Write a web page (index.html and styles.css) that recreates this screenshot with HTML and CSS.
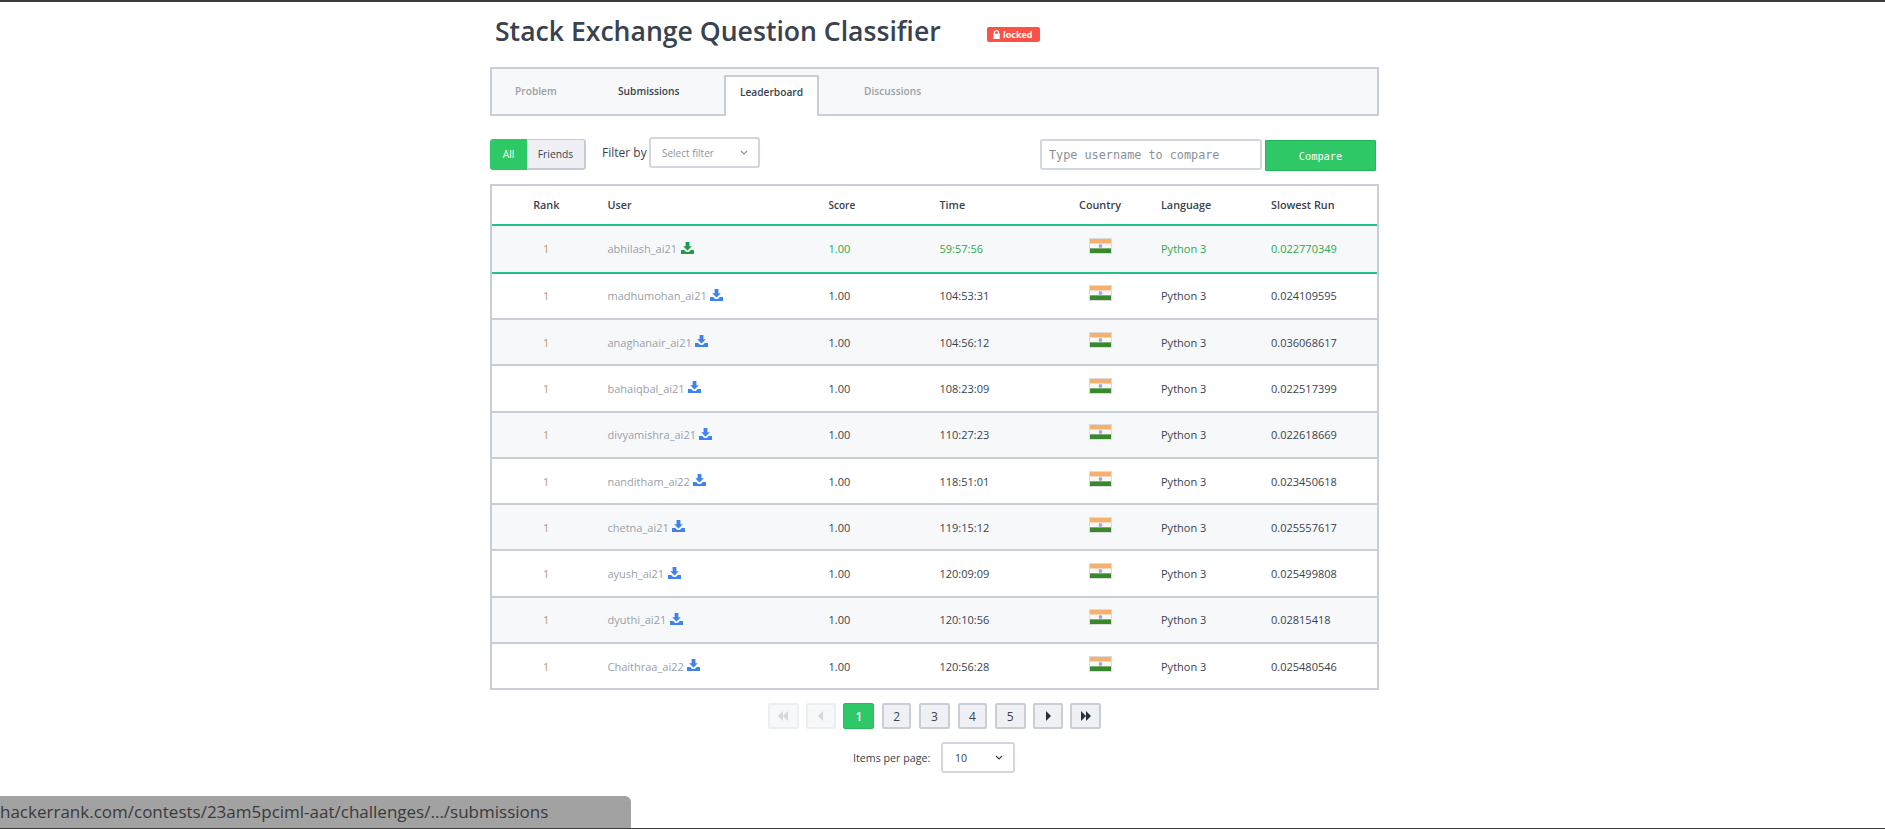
FILE: index.html
```html
<!DOCTYPE html>
<html lang="en">
<head>
<meta charset="utf-8">
<title>Stack Exchange Question Classifier</title>
<link rel="stylesheet" href="styles.css">
</head>
<body>
<svg class="defs" width="0" height="0" aria-hidden="true">
  <symbol id="dl" viewBox="0 0 13 12">
    <path d="M4.6 0h3.8v4.2h2.4L6.5 8.4 2.2 4.2h2.4z"/>
    <path d="M0 8h3.2l2 2h2.6l2-2H13v4H0z"/>
  </symbol>
  <symbol id="flag" viewBox="0 0 23 16">
    <rect width="23" height="16" fill="#dcdcdc"/>
    <rect x="1" y="1" width="21" height="4.6" fill="#f6b06e"/>
    <rect x="1" y="5.6" width="21" height="4.8" fill="#f8f8f8"/>
    <rect x="1" y="10.4" width="21" height="4.6" fill="#37892b"/>
    <circle cx="11.5" cy="8" r="1.9" fill="#a5a8d4"/>
  </symbol>
</svg>
<main class="page">
  <header class="title-row">
    <h1 class="title">Stack Exchange Question Classifier</h1>
    <span class="badge"><svg class="lock" viewBox="0 0 10 10"><path d="M2 4.2V3a3 3 0 0 1 6 0v1.2h.6V10H1.4V4.2zm1.4 0h3.2V3a1.6 1.6 0 0 0-3.2 0z"/></svg>locked</span>
  </header>

  <nav class="tabs">
    <a class="tab tab-problem muted">Problem</a>
    <a class="tab tab-subs">Submissions</a>
    <a class="tab tab-lead active">Leaderboard</a>
    <a class="tab tab-disc muted">Discussions</a>
  </nav>

  <section class="filters">
    <div class="seg"><span class="seg-all">All</span><span class="seg-friends">Friends</span></div>
    <label class="filter-label">Filter by</label>
    <div class="select filter-select"><span>Select filter</span><svg class="chev" viewBox="0 0 8 5"><path d="M1 1l3 3 3-3"/></svg></div>
    <div class="compare">
      <input class="compare-input" type="text" placeholder="Type username to compare">
      <button class="compare-btn">Compare</button>
    </div>
  </section>

  <section class="board">
    <div class="row head">
      <div class="c-rank">Rank</div><div class="c-user">User</div><div class="c-score score-head">Score</div><div class="c-time">Time</div><div class="c-country">Country</div><div class="c-lang">Language</div><div class="c-run">Slowest Run</div>
    </div>
    <div class="row me">
      <div class="c-rank">1</div><div class="c-user"><a>abhilash_ai21</a><svg class="dl"><use href="#dl"/></svg></div><div class="c-score">1.00</div><div class="c-time">59:57:56</div><div class="c-country"><svg class="flag"><use href="#flag"/></svg></div><div class="c-lang">Python 3</div><div class="c-run">0.022770349</div>
    </div>
    <div class="row">
      <div class="c-rank">1</div><div class="c-user"><a>madhumohan_ai21</a><svg class="dl"><use href="#dl"/></svg></div><div class="c-score">1.00</div><div class="c-time">104:53:31</div><div class="c-country"><svg class="flag"><use href="#flag"/></svg></div><div class="c-lang">Python 3</div><div class="c-run">0.024109595</div>
    </div>
    <div class="row alt">
      <div class="c-rank">1</div><div class="c-user"><a>anaghanair_ai21</a><svg class="dl"><use href="#dl"/></svg></div><div class="c-score">1.00</div><div class="c-time">104:56:12</div><div class="c-country"><svg class="flag"><use href="#flag"/></svg></div><div class="c-lang">Python 3</div><div class="c-run">0.036068617</div>
    </div>
    <div class="row">
      <div class="c-rank">1</div><div class="c-user"><a>bahaiqbal_ai21</a><svg class="dl"><use href="#dl"/></svg></div><div class="c-score">1.00</div><div class="c-time">108:23:09</div><div class="c-country"><svg class="flag"><use href="#flag"/></svg></div><div class="c-lang">Python 3</div><div class="c-run">0.022517399</div>
    </div>
    <div class="row alt">
      <div class="c-rank">1</div><div class="c-user"><a>divyamishra_ai21</a><svg class="dl"><use href="#dl"/></svg></div><div class="c-score">1.00</div><div class="c-time">110:27:23</div><div class="c-country"><svg class="flag"><use href="#flag"/></svg></div><div class="c-lang">Python 3</div><div class="c-run">0.022618669</div>
    </div>
    <div class="row">
      <div class="c-rank">1</div><div class="c-user"><a>nanditham_ai22</a><svg class="dl"><use href="#dl"/></svg></div><div class="c-score">1.00</div><div class="c-time">118:51:01</div><div class="c-country"><svg class="flag"><use href="#flag"/></svg></div><div class="c-lang">Python 3</div><div class="c-run">0.023450618</div>
    </div>
    <div class="row alt">
      <div class="c-rank">1</div><div class="c-user"><a>chetna_ai21</a><svg class="dl"><use href="#dl"/></svg></div><div class="c-score">1.00</div><div class="c-time">119:15:12</div><div class="c-country"><svg class="flag"><use href="#flag"/></svg></div><div class="c-lang">Python 3</div><div class="c-run">0.025557617</div>
    </div>
    <div class="row">
      <div class="c-rank">1</div><div class="c-user"><a>ayush_ai21</a><svg class="dl"><use href="#dl"/></svg></div><div class="c-score">1.00</div><div class="c-time">120:09:09</div><div class="c-country"><svg class="flag"><use href="#flag"/></svg></div><div class="c-lang">Python 3</div><div class="c-run">0.025499808</div>
    </div>
    <div class="row alt">
      <div class="c-rank">1</div><div class="c-user"><a>dyuthi_ai21</a><svg class="dl"><use href="#dl"/></svg></div><div class="c-score">1.00</div><div class="c-time">120:10:56</div><div class="c-country"><svg class="flag"><use href="#flag"/></svg></div><div class="c-lang">Python 3</div><div class="c-run">0.02815418</div>
    </div>
    <div class="row">
      <div class="c-rank">1</div><div class="c-user"><a>Chaithraa_ai22</a><svg class="dl"><use href="#dl"/></svg></div><div class="c-score">1.00</div><div class="c-time">120:56:28</div><div class="c-country"><svg class="flag"><use href="#flag"/></svg></div><div class="c-lang">Python 3</div><div class="c-run">0.025480546</div>
    </div>
  </section>

  <nav class="pager">
    <span class="pg wide off"><svg class="pi" viewBox="0 0 12 10"><path d="M6 0v10L1 5zM11 0v10L6 5z"/></svg></span>
    <span class="pg off"><svg class="pi" viewBox="0 0 12 10"><path d="M8 0v10L3 5z"/></svg></span>
    <span class="pg wide cur">1</span>
    <span class="pg">2</span>
    <span class="pg wide">3</span>
    <span class="pg">4</span>
    <span class="pg wide">5</span>
    <span class="pg"><svg class="pi" viewBox="0 0 12 10"><path d="M4 0v10l5-5z"/></svg></span>
    <span class="pg wide"><svg class="pi" viewBox="0 0 12 10"><path d="M1 0v10l5-5zM6 0v10l5-5z"/></svg></span>
  </nav>

  <div class="per-page">
    <span class="per-label">Items per page:</span>
    <div class="select per-select"><span>10</span><svg class="chev dark" viewBox="0 0 8 5"><path d="M1 1l3 3 3-3"/></svg></div>
  </div>
</main>
<div class="status">hackerrank.com/contests/23am5pciml-aat/challenges/.../submissions</div>
</body>
</html>
```

FILE: styles.css
```css
* { box-sizing: border-box; }
html, body { margin: 0; height: 100%; }
body {
  height: 829px;
  overflow: hidden;
  background: #fff;
  font-family: "Open Sans", sans-serif;
  color: #39424e;
  border-top: 2px solid #3a3a3a;
  border-bottom: 1px solid #3a3a3a;
  position: relative;
}
.defs { position: absolute; }
.page { width: 889px; margin-left: 490px; }

.title-row { display: flex; align-items: center; height: 48px; padding: 10px 0 0 5px; }
.title { margin: 0; font-size: 26.6px; line-height: 38px; font-weight: 600; color: #39424e; width: 492px; white-space: nowrap; }
.badge {
  display: inline-flex; align-items: center; gap: 2px;
  height: 15px; padding: 0 5px; margin-top: 6px; width: 53px;
  background: #fb5146; color: #fff; border-radius: 2px;
  font-size: 9px; font-weight: 700; white-space: nowrap;
}
.lock { width: 9px; height: 9px; fill: #fff; flex: none; }

.tabs {
  display: flex; align-items: flex-end;
  height: 49px; margin-top: 17px;
  background: #f7f8fa; border: 2px solid #c9cdd6;
  font-size: 10.2px; font-weight: 600;
}
.tab { display: block; height: 44px; line-height: 43px; white-space: nowrap; }
.tab-problem { width: 126px; padding-left: 23px; }
.muted { color: #9a9fa8; }
.tab-subs { width: 106px; color: #39424e; }
.tab-lead {
  width: 95px; height: 41px; line-height: 30px; margin-bottom: -2px; text-align: center;
  background: #fff; border: 2px solid #c9cdd6; border-bottom: 0; color: #39424e;
}
.tab-disc { margin-left: 45px; }

.filters { display: flex; align-items: flex-start; height: 46.5px; margin-top: 21px; position: relative; }
.seg { display: flex; height: 31px; margin-top: 2px; font-size: 10.3px; }
.seg-all { width: 37px; background: #2ec866; color: #fff; line-height: 30px; text-align: center; border-radius: 3px 0 0 3px; }
.seg-friends { width: 59px; background: #eff0f4; color: #39424e; line-height: 29px; text-align: center; border: 1px solid #c6cbd5; border-left: 0; border-bottom-width: 2px; border-right-width: 2px; border-radius: 0 3px 3px 0; }
.filter-label { font-size: 12px; margin-left: 16px; line-height: 32px; width: 47px; white-space: nowrap; }
.select {
  display: flex; align-items: center; justify-content: space-between;
  background: #fff; border: 2px solid #d2d6de; border-radius: 3px;
}
.filter-select { width: 111px; height: 31px; padding: 0 10px 0 11px; font-size: 10px; color: #8f949c; }
.chev { width: 8px; height: 5px; fill: none; stroke: #8f949c; stroke-width: 1.2; }
.chev.dark { stroke: #39424e; }
.compare { display: flex; margin-left: auto; margin-right: 3px; gap: 3px; }
.compare-input {
  width: 222px; height: 31px; margin-top: 2px; padding: 0 7px;
  border: 2px solid #d2d6de; border-radius: 3px; background: #fff;
  font-family: "DejaVu Sans Mono", monospace; font-size: 11.8px; outline: 0;
}
.compare-input::placeholder { color: #8b8f96; opacity: 1; }
.compare-btn {
  width: 111px; height: 31px; margin-top: 3px; padding: 0;
  background: #2ec866; border: 1px solid #23b658; border-radius: 1px; color: #fff;
  font-family: "DejaVu Sans Mono", monospace; font-size: 10.3px;
}

.board { border: 2px solid #c9cdd6; font-size: 11px; }
.row {
  display: grid;
  grid-template-columns: 115.5px 221px 111px 118px 103.5px 110px 1fr;
  align-items: center;
  height: 46.3px;
  border-bottom: 2px solid #c9cdd6;
  color: #39424e;
}
.row:last-child { border-bottom: 0; height: 44px; }
.row.alt { background: #f7f8fa; }
.row.head { height: 40px; font-size: 10.8px; font-weight: 600; border-bottom: 2px solid #23c087; }
.row.me { background: #f7f8fa; color: #2ba84e; border-bottom: 2px solid #23c087; height: 48.2px; }
.c-rank { text-align: center; padding-right: 7px; color: #b59a68; }
.head .c-rank { color: #39424e; }
.c-user { display: flex; align-items: center; gap: 3.5px; color: #9a9fa8; white-space: nowrap; }
.head .c-user { color: #39424e; }
.c-score.score-head { font-size: 10px; }
.c-country { text-align: center; padding-right: 18.5px; }
.flag { width: 23px; height: 16px; display: block; margin: -5px auto 0; }
.dl { width: 13px; height: 12px; fill: #3e82f0; margin-top: -2px; }
.me .dl { fill: #25994a; }

.pager { display: flex; justify-content: center; gap: 7.6px; margin-top: 13px; }
.pg {
  display: flex; align-items: center; justify-content: center;
  width: 29.5px; height: 26px;
  background: #eff0f4; border: 2px solid #c9cdd6; border-radius: 2px;
  font-size: 12px; color: #39424e;
}
.pg.wide { width: 31px; }
.pg.off { background: #f7f8fa; border-color: #eceef1; }
.pg.off .pi { fill: #d4d7dc; }
.pg.cur { background: #2ec866; border: 1px solid #25ba5c; color: #fff; font-weight: 600; }
.pi { width: 12px; height: 10px; fill: #26303a; }

.per-page { display: flex; align-items: center; justify-content: flex-start; margin-top: 13px; margin-left: 363px; }
.per-label { font-size: 10.7px; width: 88px; white-space: nowrap; color: #39424e; }
.per-select { width: 74px; height: 31px; padding: 0 10px 0 12px; font-size: 10.5px; }

.status {
  position: absolute; left: 0; bottom: 0;
  width: 631px; height: 32px;
  background: #a2a2a2; color: #3a3a3a;
  border-radius: 0 6px 0 0;
  font-family: "Open Sans", sans-serif; font-size: 17px; line-height: 32px; white-space: nowrap;
}
```
